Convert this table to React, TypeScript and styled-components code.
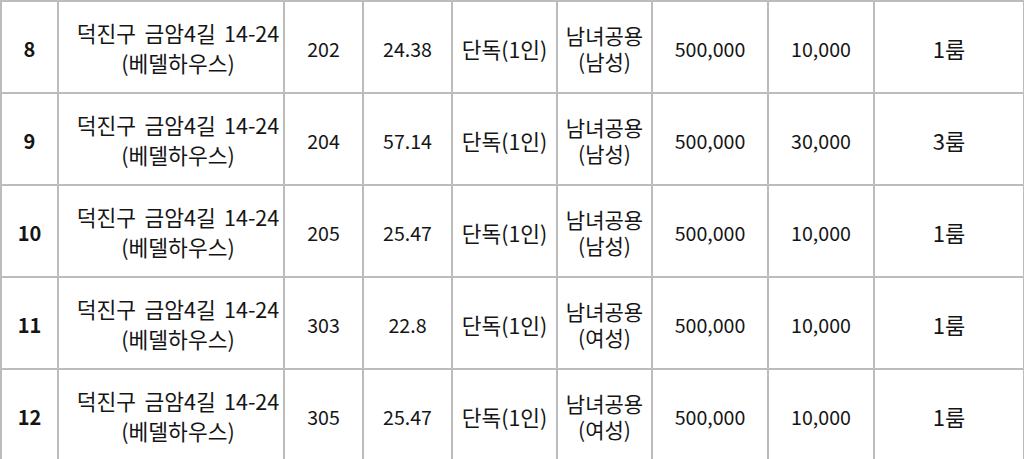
import React from 'react';
import styled, { createGlobalStyle } from 'styled-components';

interface Room {
  no: number;
  room: string;
  area: string;
  gender: string;
  deposit: string;
  fee: string;
  size: string;
}

const rooms: Room[] = [
  { no: 8, room: '202', area: '24.38', gender: '남성', deposit: '500,000', fee: '10,000', size: '1룸' },
  { no: 9, room: '204', area: '57.14', gender: '남성', deposit: '500,000', fee: '30,000', size: '3룸' },
  { no: 10, room: '205', area: '25.47', gender: '남성', deposit: '500,000', fee: '10,000', size: '1룸' },
  { no: 11, room: '303', area: '22.8', gender: '여성', deposit: '500,000', fee: '10,000', size: '1룸' },
  { no: 12, room: '305', area: '25.47', gender: '여성', deposit: '500,000', fee: '10,000', size: '1룸' },
];

const widths = [57, 226, 79, 89, 105, 95, 116, 106, 150];

const App: React.FC = () => {
  return (
    <>
      <GlobalStyle />
      <Table>
        <colgroup>
          {widths.map((w, i) => (
            <col key={i} style={{ width: w }} />
          ))}
        </colgroup>
        <tbody>
          {rooms.map((r) => (
            <Row key={r.no}>
              <NumCell>{r.no}</NumCell>
              <AddressCell>
                덕진구 금암4길 14-24
                <br />
                (베델하우스)
              </AddressCell>
              <Cell>{r.room}</Cell>
              <Cell>{r.area}</Cell>
              <Cell $size={21.4}>단독(1인)</Cell>
              <Cell $size={21} $leading={26}>
                남녀공용
                <br />({r.gender})
              </Cell>
              <Cell>{r.deposit}</Cell>
              <Cell>{r.fee}</Cell>
              <Cell $size={22}>{r.size}</Cell>
            </Row>
          ))}
        </tbody>
      </Table>
    </>
  );
};

export default App;

const GlobalStyle = createGlobalStyle`
  body {
    margin: 0;
    background: #ffffff;
    font-family: "Noto Sans CJK KR", "Noto Sans", sans-serif;
  }
`;

const Table = styled.table`
  width: 1023px;
  table-layout: fixed;
  border-collapse: collapse;
  color: #151515;
  font-size: 19.6px;
  line-height: 27px;
`;

const Row = styled.tr`
  height: 92px;
`;

const Cell = styled.td<{ $size?: number; $leading?: number }>`
  border: 2px solid #bcbcbc;
  padding: 2px 2px 0;
  text-align: center;
  vertical-align: middle;
  white-space: nowrap;
  font-size: ${(p) => (p.$size ? `${p.$size}px` : 'inherit')};
  line-height: ${(p) => (p.$leading ? `${p.$leading}px` : 'inherit')};
`;

const AddressCell = styled(Cell)`
  padding-left: 16px;
  font-size: 21.5px;
  line-height: 30px;
  word-spacing: 3.5px;
`;

const NumCell = styled(Cell)`
  font-size: 20px;
  font-weight: 700;
`;
